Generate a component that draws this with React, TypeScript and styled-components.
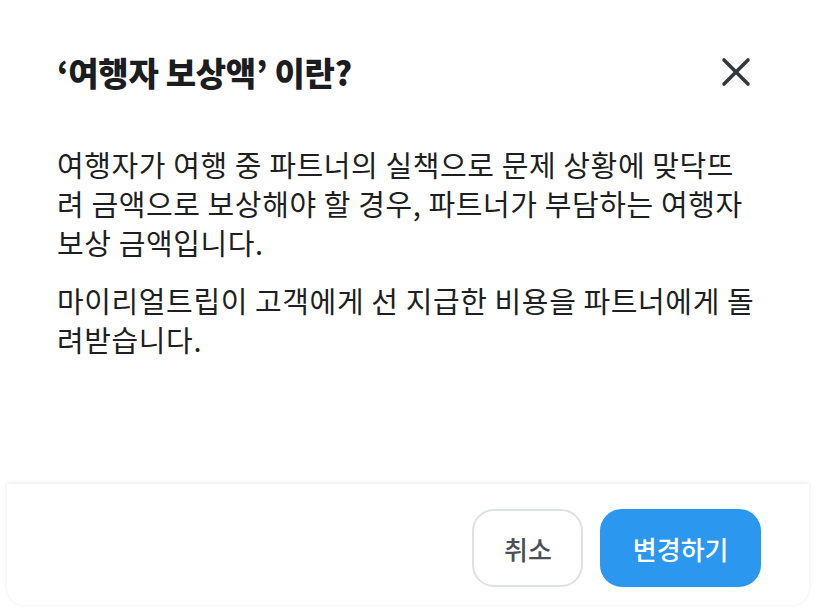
import React from "react";
import styled, { createGlobalStyle } from "styled-components";

const GlobalStyle = createGlobalStyle`
  html, body {
    margin: 0;
    padding: 0;
    background: #ffffff;
  }
  body {
    font-family: "Noto Sans CJK KR", "Noto Sans", sans-serif;
    color: #1d1f22;
  }
`;

const Modal = styled.div`
  width: 816px;
  height: 616px;
  display: flex;
  flex-direction: column;
  box-sizing: border-box;
`;

const Header = styled.div`
  display: flex;
  align-items: center;
  justify-content: space-between;
  padding: 52px 60px 0 57px;
`;

const Title = styled.h2`
  margin: 0;
  font-size: 33px;
  line-height: 40px;
  font-weight: 900;
  letter-spacing: -0.3px;
  color: #1b1d1f;
`;

const CloseButton = styled.button`
  width: 40px;
  height: 40px;
  padding: 0;
  border: none;
  background: none;
  display: flex;
  align-items: center;
  justify-content: center;
  cursor: pointer;
`;

const Body = styled.div`
  padding: 53px 57px 0 57px;
`;

const Paragraph = styled.p`
  margin: 0 0 19px 0;
  font-size: 29px;
  line-height: 39px;
  font-weight: 400;
  letter-spacing: 0.6px;
  color: #1d1f22;
  word-break: break-all;
`;

const Footer = styled.div`
  margin: auto 7px 11px 7px;
  padding: 25px 48px 18px 48px;
  display: flex;
  justify-content: flex-end;
  gap: 17px;
  background: #ffffff;
  border-radius: 0 0 18px 18px;
  box-shadow: 0 -1px 5px rgba(0, 0, 0, 0.09);
`;

const Button = styled.button<{ $primary?: boolean }>`
  height: 78px;
  padding: 0 ${(p) => (p.$primary ? "30.5px" : "29.5px")};
  border-radius: 22px;
  font-family: "Noto Sans CJK KR", "Noto Sans", sans-serif;
  font-size: 26px;
  font-weight: 500;
  letter-spacing: 0;
  cursor: pointer;
  border: 2px solid ${(p) => (p.$primary ? "#2b97ee" : "#dde1e6")};
  background: ${(p) => (p.$primary ? "#2b97ee" : "#ffffff")};
  color: ${(p) => (p.$primary ? "#ffffff" : "#4a4f55")};
`;

const CloseIcon = () => (
  <svg width="30" height="30" viewBox="0 0 30 30" fill="none">
    <path
      d="M3 3 L27 27 M27 3 L3 27"
      stroke="#33363b"
      strokeWidth="3.6"
      strokeLinecap="round"
    />
  </svg>
);

export default function App() {
  return (
    <>
      <GlobalStyle />
      <Modal>
        <Header>
          <Title>‘여행자 보상액’ 이란?</Title>
          <CloseButton aria-label="닫기">
            <CloseIcon />
          </CloseButton>
        </Header>
        <Body>
          <Paragraph>
            여행자가 여행 중 파트너의 실책으로 문제 상황에 맞닥뜨려 금액으로
            보상해야 할 경우, 파트너가 부담하는 여행자 보상 금액입니다.
          </Paragraph>
          <Paragraph>
            마이리얼트립이 고객에게 선 지급한 비용을 파트너에게 돌려받습니다.
          </Paragraph>
        </Body>
        <Footer>
          <Button>취소</Button>
          <Button $primary>변경하기</Button>
        </Footer>
      </Modal>
    </>
  );
}
